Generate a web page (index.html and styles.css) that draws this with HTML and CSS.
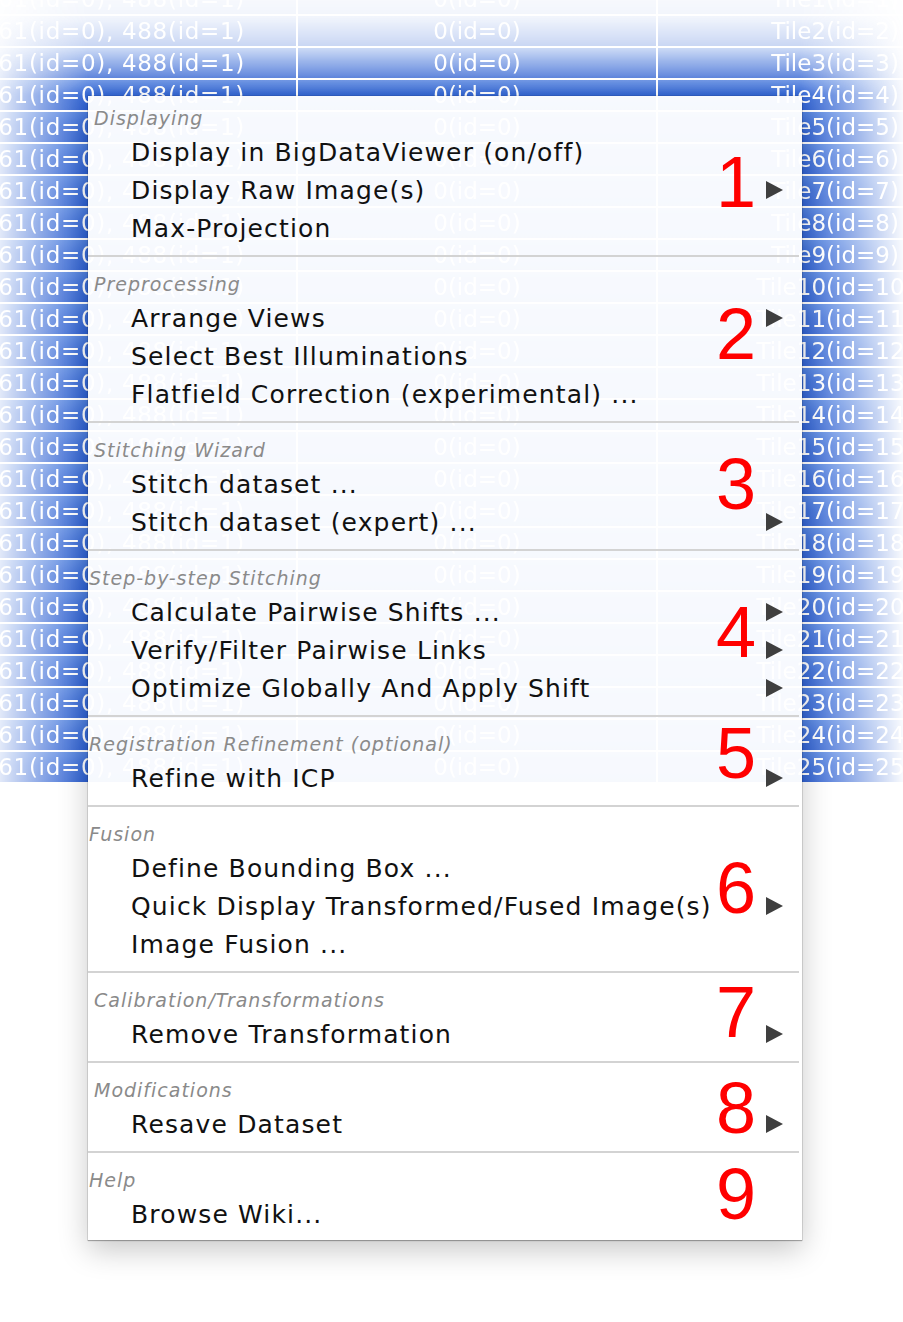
FILE: index.html
```html
<!DOCTYPE html>
<html>
<head>
<meta charset="utf-8">
<link rel="stylesheet" href="styles.css">
</head>
<body>
<div class="fade-h">
  <div class="fade-v">
    <div class="table">
      <div class="row"><div class="c1"><span>561(id=0), 488(id=1)</span></div><div class="c2">0(id=0)</div><div class="c3">Tile1(id=1)</div></div>
      <div class="row"><div class="c1"><span>561(id=0), 488(id=1)</span></div><div class="c2">0(id=0)</div><div class="c3">Tile2(id=2)</div></div>
      <div class="row"><div class="c1"><span>561(id=0), 488(id=1)</span></div><div class="c2">0(id=0)</div><div class="c3">Tile3(id=3)</div></div>
      <div class="row"><div class="c1"><span>561(id=0), 488(id=1)</span></div><div class="c2">0(id=0)</div><div class="c3">Tile4(id=4)</div></div>
      <div class="row"><div class="c1"><span>561(id=0), 488(id=1)</span></div><div class="c2">0(id=0)</div><div class="c3">Tile5(id=5)</div></div>
      <div class="row"><div class="c1"><span>561(id=0), 488(id=1)</span></div><div class="c2">0(id=0)</div><div class="c3">Tile6(id=6)</div></div>
      <div class="row"><div class="c1"><span>561(id=0), 488(id=1)</span></div><div class="c2">0(id=0)</div><div class="c3">Tile7(id=7)</div></div>
      <div class="row"><div class="c1"><span>561(id=0), 488(id=1)</span></div><div class="c2">0(id=0)</div><div class="c3">Tile8(id=8)</div></div>
      <div class="row"><div class="c1"><span>561(id=0), 488(id=1)</span></div><div class="c2">0(id=0)</div><div class="c3">Tile9(id=9)</div></div>
      <div class="row"><div class="c1"><span>561(id=0), 488(id=1)</span></div><div class="c2">0(id=0)</div><div class="c3">Tile10(id=10)</div></div>
      <div class="row"><div class="c1"><span>561(id=0), 488(id=1)</span></div><div class="c2">0(id=0)</div><div class="c3">Tile11(id=11)</div></div>
      <div class="row"><div class="c1"><span>561(id=0), 488(id=1)</span></div><div class="c2">0(id=0)</div><div class="c3">Tile12(id=12)</div></div>
      <div class="row"><div class="c1"><span>561(id=0), 488(id=1)</span></div><div class="c2">0(id=0)</div><div class="c3">Tile13(id=13)</div></div>
      <div class="row"><div class="c1"><span>561(id=0), 488(id=1)</span></div><div class="c2">0(id=0)</div><div class="c3">Tile14(id=14)</div></div>
      <div class="row"><div class="c1"><span>561(id=0), 488(id=1)</span></div><div class="c2">0(id=0)</div><div class="c3">Tile15(id=15)</div></div>
      <div class="row"><div class="c1"><span>561(id=0), 488(id=1)</span></div><div class="c2">0(id=0)</div><div class="c3">Tile16(id=16)</div></div>
      <div class="row"><div class="c1"><span>561(id=0), 488(id=1)</span></div><div class="c2">0(id=0)</div><div class="c3">Tile17(id=17)</div></div>
      <div class="row"><div class="c1"><span>561(id=0), 488(id=1)</span></div><div class="c2">0(id=0)</div><div class="c3">Tile18(id=18)</div></div>
      <div class="row"><div class="c1"><span>561(id=0), 488(id=1)</span></div><div class="c2">0(id=0)</div><div class="c3">Tile19(id=19)</div></div>
      <div class="row"><div class="c1"><span>561(id=0), 488(id=1)</span></div><div class="c2">0(id=0)</div><div class="c3">Tile20(id=20)</div></div>
      <div class="row"><div class="c1"><span>561(id=0), 488(id=1)</span></div><div class="c2">0(id=0)</div><div class="c3">Tile21(id=21)</div></div>
      <div class="row"><div class="c1"><span>561(id=0), 488(id=1)</span></div><div class="c2">0(id=0)</div><div class="c3">Tile22(id=22)</div></div>
      <div class="row"><div class="c1"><span>561(id=0), 488(id=1)</span></div><div class="c2">0(id=0)</div><div class="c3">Tile23(id=23)</div></div>
      <div class="row"><div class="c1"><span>561(id=0), 488(id=1)</span></div><div class="c2">0(id=0)</div><div class="c3">Tile24(id=24)</div></div>
      <div class="row"><div class="c1"><span>561(id=0), 488(id=1)</span></div><div class="c2">0(id=0)</div><div class="c3">Tile25(id=25)</div></div>
    </div>
  </div>
</div>

<div class="menu">
  <section class="sec first">
    <div class="hdr ind">Displaying</div>
    <div class="item"><span>Display in BigDataViewer (on/off)</span></div>
    <div class="item"><span>Display Raw Image(s)</span><i class="arr"></i></div>
    <div class="item"><span>Max-Projection</span></div>
  </section>
  <section class="sec">
    <div class="hdr ind">Preprocessing</div>
    <div class="item"><span>Arrange Views</span><i class="arr"></i></div>
    <div class="item"><span>Select Best Illuminations</span></div>
    <div class="item"><span>Flatfield Correction (experimental) ...</span></div>
  </section>
  <section class="sec">
    <div class="hdr ind">Stitching Wizard</div>
    <div class="item"><span>Stitch dataset ...</span></div>
    <div class="item"><span>Stitch dataset (expert) ...</span><i class="arr"></i></div>
  </section>
  <section class="sec">
    <div class="hdr">Step-by-step Stitching</div>
    <div class="item"><span>Calculate Pairwise Shifts ...</span><i class="arr"></i></div>
    <div class="item"><span>Verify/Filter Pairwise Links</span><i class="arr"></i></div>
    <div class="item"><span>Optimize Globally And Apply Shift</span><i class="arr"></i></div>
  </section>
  <section class="sec">
    <div class="hdr">Registration Refinement (optional)</div>
    <div class="item"><span>Refine with ICP</span><i class="arr"></i></div>
  </section>
  <section class="sec">
    <div class="hdr">Fusion</div>
    <div class="item"><span>Define Bounding Box ...</span></div>
    <div class="item"><span>Quick Display Transformed/Fused Image(s)</span><i class="arr"></i></div>
    <div class="item"><span>Image Fusion ...</span></div>
  </section>
  <section class="sec">
    <div class="hdr ind">Calibration/Transformations</div>
    <div class="item"><span>Remove Transformation</span><i class="arr"></i></div>
  </section>
  <section class="sec">
    <div class="hdr ind">Modifications</div>
    <div class="item"><span>Resave Dataset</span><i class="arr"></i></div>
  </section>
  <section class="sec last">
    <div class="hdr">Help</div>
    <div class="item"><span>Browse Wiki...</span></div>
  </section>

  <span class="num n1">1</span>
  <span class="num n2">2</span>
  <span class="num n3">3</span>
  <span class="num n4">4</span>
  <span class="num n5">5</span>
  <span class="num n6">6</span>
  <span class="num n7">7</span>
  <span class="num n8">8</span>
  <span class="num n9">9</span>
</div>
</body>
</html>
```
FILE: styles.css
```css
html, body {
  margin: 0;
  padding: 0;
  overflow: hidden;
  background: #ffffff;
}
body {
  position: relative;
  width: 903px;
  height: 1322px;
  font-family: "DejaVu Sans", "Liberation Sans", sans-serif;
}

/* background table, faded at the edges */
.fade-h {
  width: 1010px;
  margin-top: -16px;
  -webkit-mask-image: linear-gradient(to right, rgba(0,0,0,0.14) 0, #000 88px, #000 800px, rgba(0,0,0,0.03) 903px);
  mask-image: linear-gradient(to right, rgba(0,0,0,0.14) 0, #000 88px, #000 800px, rgba(0,0,0,0.03) 903px);
}
.fade-v {
  -webkit-mask-image: linear-gradient(to bottom, rgba(0,0,0,0.02) 0, rgba(0,0,0,0.04) 16px, rgba(0,0,0,0.06) 30px, rgba(0,0,0,0.25) 62px, rgba(0,0,0,0.75) 94px, #000 112px);
  mask-image: linear-gradient(to bottom, rgba(0,0,0,0.02) 0, rgba(0,0,0,0.04) 16px, rgba(0,0,0,0.06) 30px, rgba(0,0,0,0.25) 62px, rgba(0,0,0,0.75) 94px, #000 112px);
}
.table {
  display: flex;
  flex-direction: column;
  gap: 2px;
  background: #ffffff;
}
.row {
  display: grid;
  grid-template-columns: 296px 358px 354px;
  column-gap: 2px;
  height: 30px;
}
.row > div {
  background: linear-gradient(to bottom, #4a7cde 0%, #3367d6 45%, #2a5dd0 100%);
  color: #ffffff;
  font-size: 23px;
  line-height: 30px;
  white-space: nowrap;
  overflow: hidden;
}
.c1 {
  display: flex;
  justify-content: flex-end;
  padding-right: 51px;
  letter-spacing: 0.7px;
}
.c1 span {
  flex: none;
}
.c2, .c3 {
  text-align: center;
}

/* popup menu */
.menu {
  position: absolute;
  left: 88px;
  top: 96px;
  width: 714px;
  background: rgba(255, 255, 255, 0.96);
  box-shadow: 0 0 0 1px rgba(0,0,0,0.08), 0 1px 1px rgba(0,0,0,0.25), 0 10px 28px rgba(0,0,0,0.22);
}
.sec {
  margin-right: 3px;
  padding: 12px 0 8px;
  border-bottom: 2px solid #d3d3d3;
}
.sec.first {
  padding-top: 7px;
}
.sec.last {
  border-bottom: none;
  padding-bottom: 7px;
}
.hdr {
  height: 30px;
  line-height: 30px;
  font-size: 19px;
  font-style: italic;
  letter-spacing: 1px;
  color: #8a8a8a;
  padding-left: 1px;
  white-space: nowrap;
}
.hdr.ind {
  padding-left: 6px;
}
.item {
  display: flex;
  align-items: center;
  justify-content: space-between;
  height: 38px;
  padding: 0 16px 0 43px;
  font-size: 25px;
  letter-spacing: 1.15px;
  color: #111111;
  white-space: nowrap;
}
.arr {
  display: block;
  width: 0;
  height: 0;
  border-left: 17px solid #3f3f3f;
  border-top: 9px solid transparent;
  border-bottom: 9px solid transparent;
}

/* red annotation numbers */
.num {
  position: absolute;
  left: 628px;
  font-family: "Liberation Sans", Arial, sans-serif;
  font-size: 72px;
  line-height: 72px;
  color: #ff0000;
}
.n1 { top: 50px; }
.n2 { top: 202px; }
.n3 { top: 352px; }
.n4 { top: 500px; }
.n5 { top: 621px; }
.n6 { top: 756px; }
.n7 { top: 880px; }
.n8 { top: 976px; }
.n9 { top: 1062px; }
```
